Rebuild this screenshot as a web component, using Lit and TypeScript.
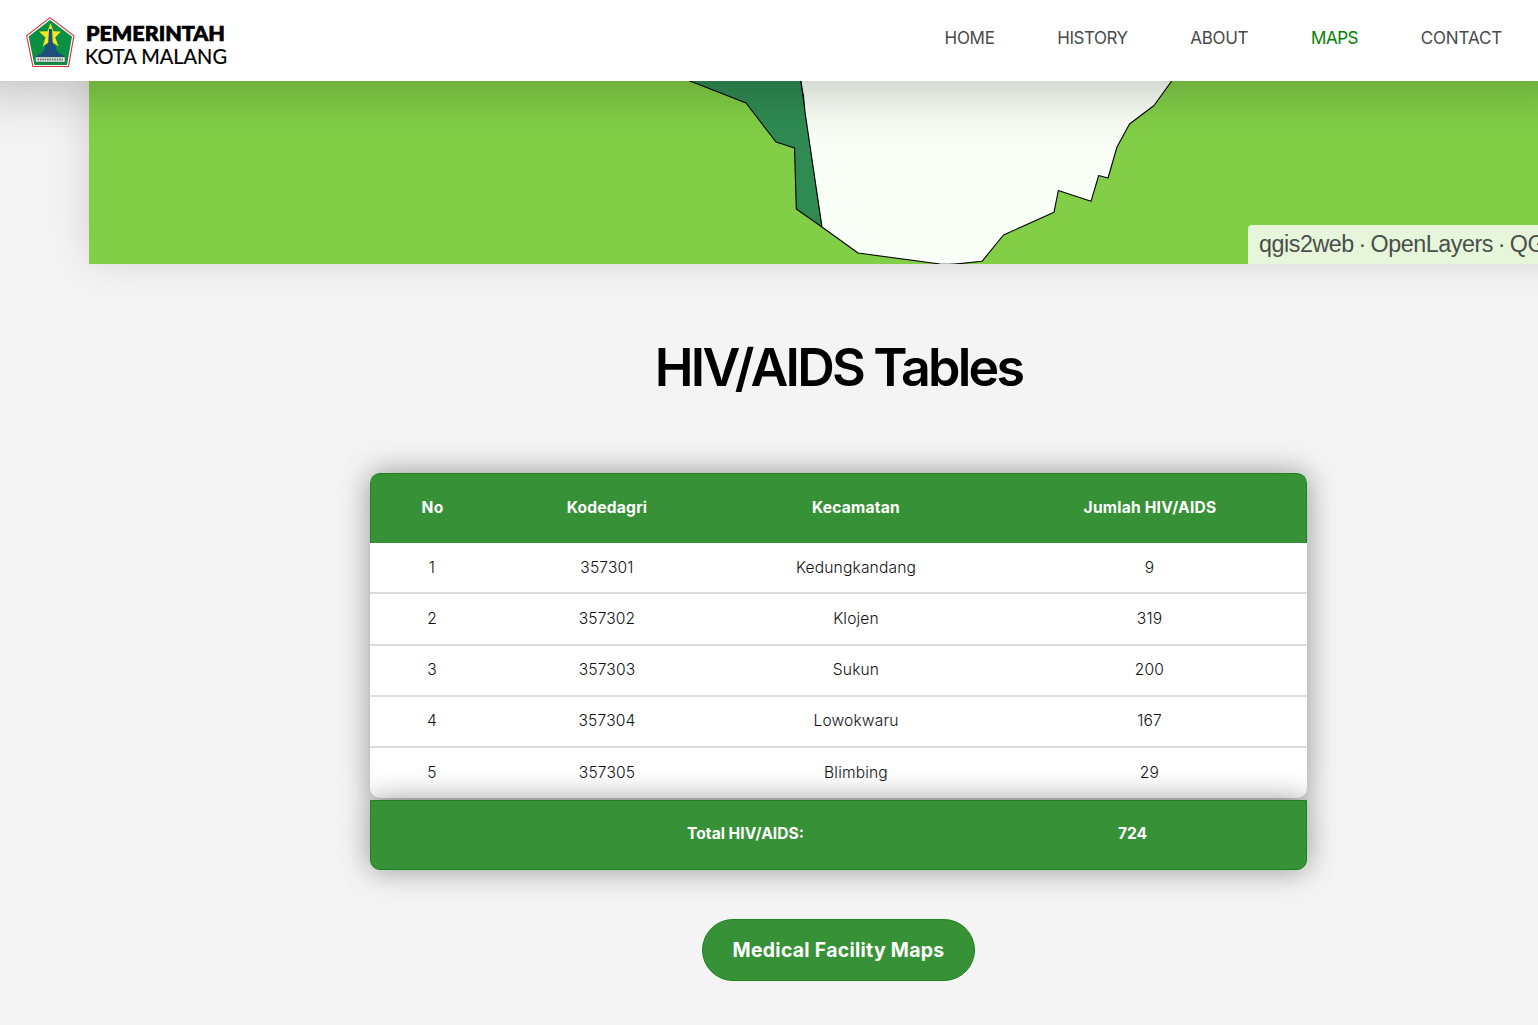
import { LitElement, html, css, svg } from "lit";
import { customElement } from "lit/decorators.js";
import { classMap } from "lit/directives/class-map.js";

const NAV = ["HOME", "HISTORY", "ABOUT", "MAPS", "CONTACT"];
const COLUMNS = ["No", "Kodedagri", "Kecamatan", "Jumlah HIV/AIDS"];
const ROWS = [
  ["1", "357301", "Kedungkandang", "9"],
  ["2", "357302", "Klojen", "319"],
  ["3", "357303", "Sukun", "200"],
  ["4", "357304", "Lowokwaru", "167"],
  ["5", "357305", "Blimbing", "29"],
];

@customElement("city-logo")
class CityLogo extends LitElement {
  static styles = css`
    :host { display: block; width: 210px; height: 56px; }
    svg { display: block; overflow: visible; }
    .bold { font: 900 20.6px "Lato", sans-serif; stroke: #000; stroke-width: 0.7; }
    .light { font: 400 20.4px "Lato", sans-serif; stroke: #000; stroke-width: 0.2; }
  `;
  render() {
    return html`<svg width="210" height="56" viewBox="24 14 210 56">
      <path d="M50 17 L74.5 35.5 L69 67 L32.5 67 L26 35.5 Z" fill="#d8323a"></path>
      <path d="M50 18.3 L73.3 36 L68 66 L33.4 66 L27.2 36 Z" fill="#fff"></path>
      <path d="M50 19.9 L72 36.5 L67 64.9 L34.4 64.9 L28.6 36.5 Z" fill="#0b8f43"></path>
      <path d="M50.5 23 L53.4 31.2 L61 31.6 L55.2 37.4 L58.6 46.4 L50.5 41 L42.6 46.4 L45.5 37.4 L39 31.6 L47.6 31.2 Z" fill="#f5e71f"></path>
      <path d="M49 29 L52 29 L52.8 43.5 L55 45 L56.5 50 L58.5 52.5 L64.5 56.3 L64.5 59 L36 59 L36 56.3 L42.2 52.5 L44.4 50 L45.8 45 L48.2 43.5 Z" fill="#1d4f7c"></path>
      <path d="M35.5 57 H65 V62 H35.5 Z" fill="#e9f0ec" stroke="#35584a" stroke-width=".5"></path>
      <path d="M37.5 59.5 H63" stroke="#5c6f6a" stroke-width="1.8" stroke-dasharray="1.6 .8"></path>
      <text class="bold" x="86" y="41" textLength="139" lengthAdjust="spacingAndGlyphs">PEMERINTAH</text>
      <text class="light" x="85" y="63.9" textLength="142" lengthAdjust="spacingAndGlyphs">KOTA MALANG</text>
    </svg>`;
  }
}

@customElement("district-map")
class DistrictMap extends LitElement {
  static styles = css`
    :host {
      display: block; position: relative; height: 183px; background: #82cf47;
      box-shadow: 0 -4px 40px rgba(0, 0, 0, 0.14);
    }
    svg { display: block; }
    .attribution {
      position: absolute; left: 1159px; bottom: 0; box-sizing: border-box;
      width: 340px; height: 39px; padding: 0 11px; border-radius: 4px 0 0 0;
      background: rgba(255, 255, 255, 0.8); color: #4b4f4b;
      font: 23.3px/38px "Liberation Sans", Arial, sans-serif; white-space: nowrap;
      letter-spacing: -0.45px; word-spacing: -1.3px;
    }
  `;
  render() {
    return html`<svg width="1499" height="183" viewBox="89 81 1499 183">
        ${svg`<g stroke="#000" stroke-width="1.1" stroke-linejoin="round">
          <path fill="#2f8b52" d="M660 69 L690 81 L746 103 L776 142 L794.5 148 L796.3 209 L822 227 L803 96 L800 75 Z"></path>
          <path fill="#f9fff6" d="M800 75 L802 88 L803.5 96 L805 112 L822 227 L858 253 L940 264 Q950 264.8 960 263.6 L982 261.3 L1003.5 235 L1054 212.3 L1058.3 190.5 L1091 201.3 L1098.7 175.5 L1108 178 L1117 147 L1129.5 124 L1154 105.5 L1176 75 Z"></path>
        </g>`}
      </svg>
      <div class="attribution">qgis2web · OpenLayers · QGIS</div>`;
  }
}

@customElement("cases-table")
class CasesTable extends LitElement {
  static styles = css`
    :host { display: block; width: 937px; font: 15.6px/24px "Inter", sans-serif; color: #111; }
    .grid { display: grid; grid-template-columns: 124px 226px 272px 315px; text-align: center; }
    .main { border-radius: 10px; background: #fff; box-shadow: 0 0 30px rgba(0, 0, 0, 0.4); }
    .head, .foot {
      box-sizing: border-box; height: 70px; align-items: center; background: #379237;
      color: #fff; font-weight: 700; font-size: 15.6px; letter-spacing: 0.2px; border: 1px solid #1c851c;
    }
    .head {
      border-bottom: 0; border-radius: 10px 10px 0 0; padding-bottom: 2px;
      grid-template-columns: 123px 226px 272px 316px;
    }
    .row {
      box-sizing: border-box; height: 51.25px; padding-top: 12.6px; border-bottom: 2px solid #ddd;
      font-weight: 300; letter-spacing: 0.15px;
    }
    .row:last-child { border-bottom: 0; height: 50px; padding-top: 13px; }
    .foot {
      position: relative; margin-top: 2px; border-radius: 0 0 10px 10px; padding-bottom: 2px;
      grid-template-columns: 163px 423px 351px; box-shadow: 0 0 30px rgba(0, 0, 0, 0.4);
      letter-spacing: 0;
    }
    .total { grid-column: 2; }
  `;
  render() {
    return html`<div class="main">
        <div class="grid head">${COLUMNS.map((c) => html`<span>${c}</span>`)}</div>
        ${ROWS.map((r) => html`<div class="grid row">${r.map((v) => html`<span>${v}</span>`)}</div>`)}
      </div>
      <div class="grid foot"><span class="total">Total HIV/AIDS:</span><span>724</span></div>`;
  }
}

@customElement("app-root")
class AppRoot extends LitElement {
  static styles = css`
    :host { display: block; width: 100%; height: 1025px; overflow: hidden; background: #f4f4f4; font-family: "Inter", sans-serif; }
    .header {
      position: relative; z-index: 2; box-sizing: border-box; height: 81px; padding: 14px 36px 0 24px;
      display: flex; justify-content: space-between; background: #fff;
      box-shadow: 0 -35px 60px 40px rgba(0, 0, 0, 0.26);
    }
    .nav { display: flex; gap: 62.8px; padding-top: 11px; font-size: 17px; line-height: 26px; letter-spacing: -0.3px; color: #4a4a4a; }
    .item:nth-child(2) { letter-spacing: -0.5px; }
    .item:nth-child(4) { letter-spacing: -0.5px; }
    .item:nth-child(5) { letter-spacing: -0.15px; }
    .active { color: #008000; }
    .content { width: 1499px; margin-left: 89px; display: flex; flex-direction: column; align-items: center; }
    .map { align-self: stretch; }
    .title { margin: 73px 0 0; height: 62px; font-size: 52px; line-height: 62px; font-weight: 600; letter-spacing: -2.8px; color: #000; }
    .table { margin-top: 74px; }
    .button {
      box-sizing: border-box; width: 273px; height: 62px; margin-top: 49px; border: 1px solid #1c851c;
      border-radius: 31px; background: #379237; color: #fff; font: 700 19.4px/24px "Inter", sans-serif; letter-spacing: 0.3px;
    }
  `;
  render() {
    return html`<header class="header">
        <city-logo></city-logo>
        <nav class="nav">
          ${NAV.map((n) => html`<span class=${classMap({ item: true, active: n === "MAPS" })}>${n}</span>`)}
        </nav>
      </header>
      <main class="content">
        <district-map class="map"></district-map>
        <h1 class="title">HIV/AIDS Tables</h1>
        <cases-table class="table"></cases-table>
        <button class="button">Medical Facility Maps</button>
      </main>`;
  }
}
